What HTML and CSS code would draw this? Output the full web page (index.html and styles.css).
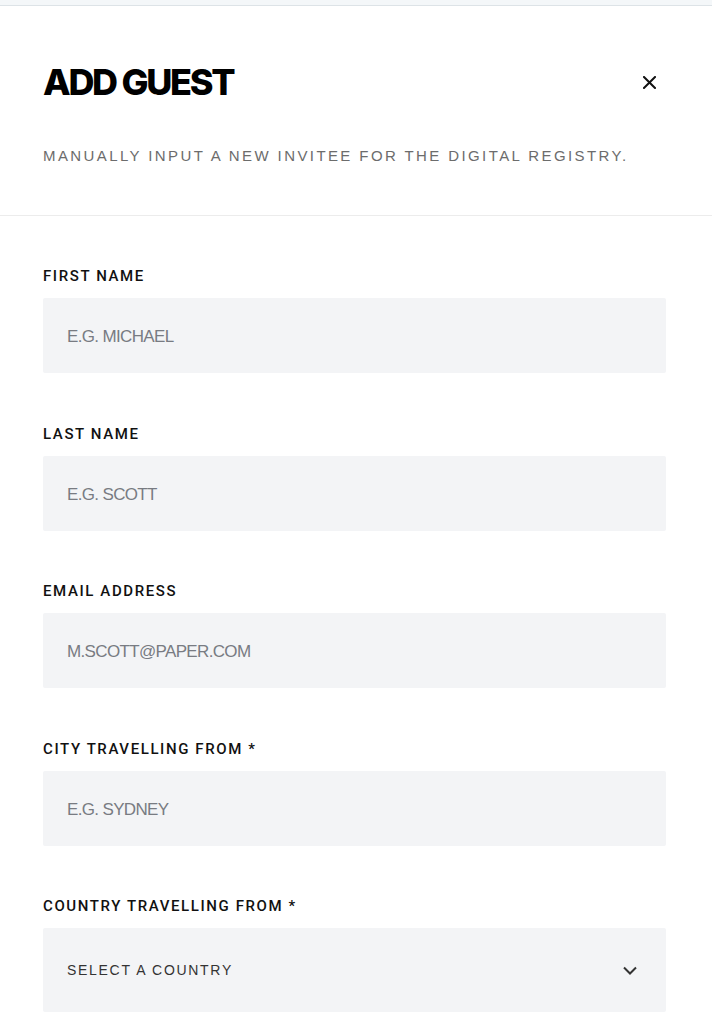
FILE: index.html
```html
<!DOCTYPE html>
<html lang="en">
<head>
<meta charset="utf-8">
<title>Add Guest</title>
<link rel="stylesheet" href="styles.css">
</head>
<body>
<div class="topband"></div>
<header class="head">
  <div class="head-row">
    <h1 class="title">ADD GUEST</h1>
    <button class="close" aria-label="Close">
      <svg width="13" height="13" viewBox="0 0 13 13"><path d="M1 1L12 12M12 1L1 12" stroke="#111" stroke-width="2" fill="none" stroke-linecap="square"/></svg>
    </button>
  </div>
  <p class="subtitle">MANUALLY INPUT A NEW INVITEE FOR THE DIGITAL REGISTRY.</p>
</header>
<form class="form">
  <div class="field">
    <label class="label">FIRST NAME</label>
    <input class="input" placeholder="E.G. MICHAEL">
  </div>
  <div class="field">
    <label class="label">LAST NAME</label>
    <input class="input" placeholder="E.G. SCOTT">
  </div>
  <div class="field">
    <label class="label">EMAIL ADDRESS</label>
    <input class="input" placeholder="M.SCOTT@PAPER.COM">
  </div>
  <div class="field">
    <label class="label">CITY TRAVELLING FROM *</label>
    <input class="input" placeholder="E.G. SYDNEY">
  </div>
  <div class="field">
    <label class="label">COUNTRY TRAVELLING FROM *</label>
    <div class="select">
      <span class="select-text">SELECT A COUNTRY</span>
      <svg width="14" height="9" viewBox="0 0 14 9"><path d="M1 1.5L7 7.5L13 1.5" stroke="#333" stroke-width="2" fill="none"/></svg>
    </div>
  </div>
</form>
</body>
</html>
```

FILE: styles.css
```css
* { box-sizing: border-box; }
html, body { margin: 0; padding: 0; background: #fff; }
body { font-family: "Liberation Sans", Arial, sans-serif; color: #111; }

.topband {
  height: 6px;
  background: #f4f7f9;
  border-bottom: 1px solid #dde3e7;
}

.head {
  padding: 58px 46px 49px 43px;
  border-bottom: 1px solid #ececec;
}
.head-row {
  display: flex;
  justify-content: space-between;
  align-items: center;
}
.title {
  margin: 0;
  font-family: Inter, "Liberation Sans", sans-serif;
  font-weight: 800;
  font-size: 36px;
  line-height: 36px;
  letter-spacing: -2.3px;
  color: #000;
}
.close {
  border: 0;
  background: none;
  padding: 0;
  margin-right: 10px;
  width: 13px;
  height: 13px;
  display: flex;
  cursor: pointer;
}
.subtitle {
  margin: 46px 0 0;
  font-size: 15px;
  line-height: 20px;
  letter-spacing: 2.4px;
  color: #6c6c6c;
}

.form {
  padding: 50px 46px 0 43px;
  display: flex;
  flex-direction: column;
  gap: 50.5px;
}
.field {
  display: flex;
  flex-direction: column;
  gap: 12px;
}
.label {
  font-family: Roboto, "Liberation Sans", sans-serif;
  font-size: 15px;
  line-height: 20px;
  font-weight: 500;
  letter-spacing: 1.6px;
  color: #111;
}
.input {
  height: 75px;
  border: 0;
  border-radius: 2px;
  background: #f3f4f6;
  padding: 3px 24px 0;
  font-family: "Liberation Sans", Arial, sans-serif;
  font-size: 17px;
  letter-spacing: -0.65px;
  color: #111;
  outline: none;
}
.input::placeholder { color: #787b82; opacity: 1; }

.select {
  height: 84px;
  border-radius: 2px;
  background: #f3f4f6;
  padding: 0 29px 0 24px;
  display: flex;
  align-items: center;
  justify-content: space-between;
}
.select-text {
  font-size: 14px;
  letter-spacing: 1.7px;
  color: #333;
}
```
